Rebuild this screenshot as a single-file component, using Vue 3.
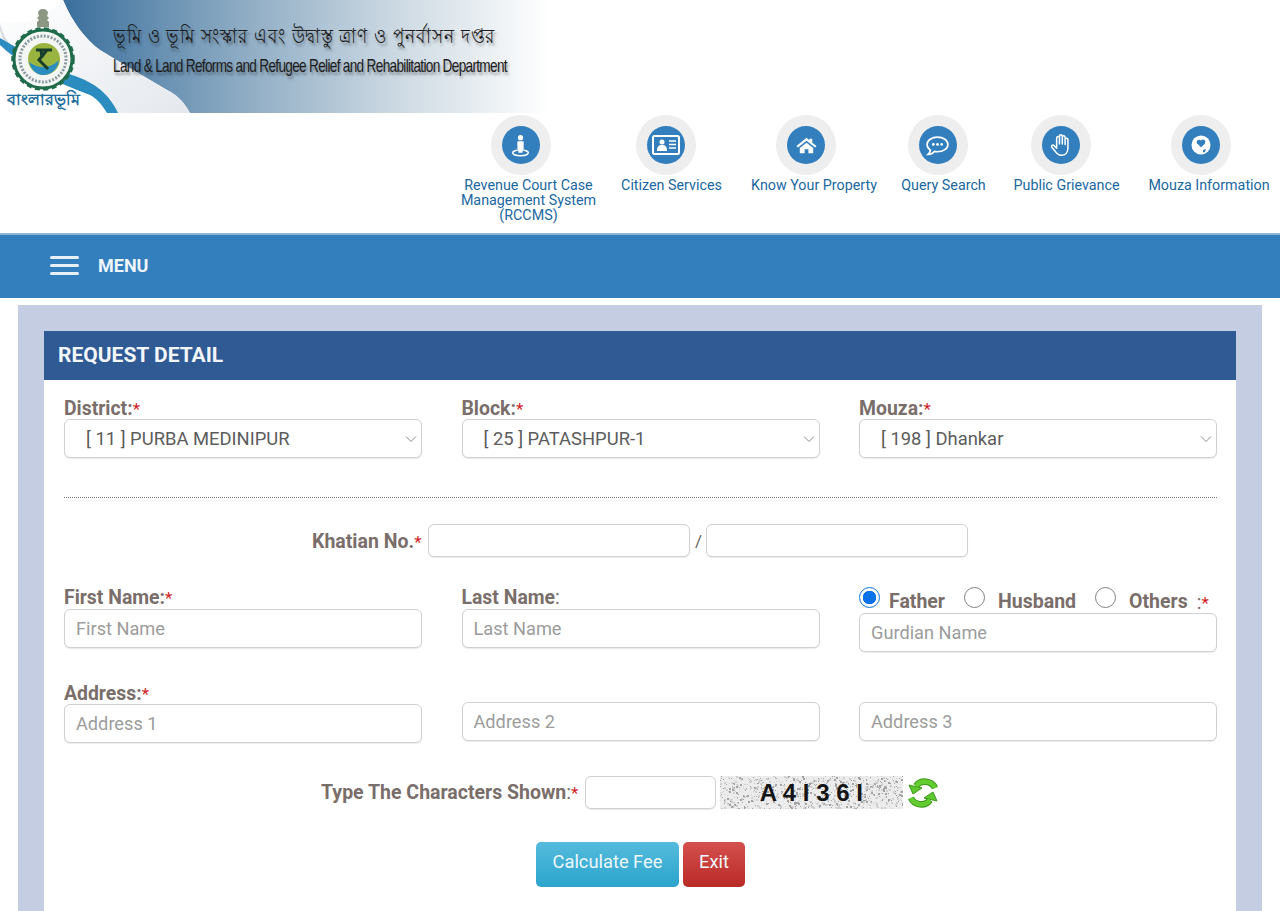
<template>
  <div class="page">
    <header class="banner">
      <svg class="banner-art" viewBox="0 0 550 113" width="550" height="113" aria-hidden="true">
        <defs>
          <linearGradient id="bannerFill" x1="0" y1="0" x2="1" y2="0">
            <stop offset="0" stop-color="#3a6f9c" />
            <stop offset="0.35" stop-color="#8aa9c2" />
            <stop offset="0.7" stop-color="#cfdbe4" />
            <stop offset="1" stop-color="#ffffff" />
          </linearGradient>
          <linearGradient id="gapFill" x1="0" y1="0" x2="1" y2="1">
            <stop offset="0" stop-color="#ffffff" />
            <stop offset="1" stop-color="#e4e8ed" />
          </linearGradient>
        </defs>
        <path d="M63 0H550V113H190C183 100 175 94 167 90L133 70L100 50C86 40 72 22 63 0Z" fill="url(#bannerFill)" />
        <path d="M63 0C72 22 86 40 100 50L133 70L167 90C175 94 183 100 190 113H118C112 98 104 90 90 84L0 38V20C20 30 50 14 63 0Z" fill="url(#gapFill)" />
        <path d="M0 24C4 38 10 46 22 56L14 57C6 48 2 38 0 30Z" fill="#d8dde2" />
        <path d="M0 38C24 52 50 66 72 75C88 80 108 90 118 113H107C101 103 96 98 90 95C80 91 72 88 65 85C44 76 26 68 14 57C8 52 4 49 0 45Z" fill="#2b8dbf" />
        <path d="M43 9c3 0 5 2 5 4l-1 3 2 2-2 2 2 2v5H37v-5l2-2-2-2 2-2-1-3c0-2 2-4 5-4Z" fill="#8b9683" />
        <circle cx="43" cy="59" r="29" fill="#f3f6f3" stroke="#1f6b4c" stroke-width="3" />
        <circle cx="43" cy="59" r="30.500" fill="none" stroke="#1f6b4c" stroke-width="2.500" stroke-dasharray="5 3.500" />
        <circle cx="43" cy="59" r="23" fill="none" stroke="#8b9aa0" stroke-width="3" stroke-dasharray="2 1.500" />
        <circle cx="44" cy="59" r="16" fill="#9ab53f" />
        <path d="M29 62c8 6 20 8 30-2-1 9-8 15-16 15-7 0-12-6-14-13Z" fill="#2b8dbf" />
        <path d="M36 50h16M47 50l-8 10 9 9M41 50l1 8" fill="none" stroke="#173d2b" stroke-width="3" />
      </svg>
      <span class="banner-seal-name">বাংলারভূমি</span>
      <div class="banner-text">
        <div class="banner-bn">ভূমি ও ভূমি সংস্কার এবং উদ্বাস্তু ত্রাণ ও পুনর্বাসন দপ্তর</div>
        <div class="banner-en">Land &amp; Land Reforms and Refugee Relief and Rehabilitation Department</div>
      </div>
    </header>

    <nav class="quick-links">
      <a class="quick-link rccms">
        <span class="halo"><span class="disc">
          <svg viewBox="0 0 24 24" width="25" height="25">
            <circle cx="12" cy="4.500" r="2.500" fill="#fff" />
            <path d="M9 8h6v7l-1 1v3h-4v-3l-1-1Z" fill="#fff" />
            <ellipse cx="12" cy="19" rx="7.500" ry="2.800" fill="none" stroke="#fff" stroke-width="1.400" />
          </svg>
        </span></span>
        <span class="quick-label">Revenue Court Case Management System (RCCMS)</span>
      </a>
      <a class="quick-link citizen">
        <span class="halo"><span class="disc">
          <svg viewBox="0 0 30 24" width="30" height="24">
            <rect x="2" y="3" width="26" height="18" rx="1.500" fill="none" stroke="#fff" stroke-width="2" />
            <circle cx="11" cy="9" r="2.500" fill="#fff" />
            <path d="M6 18c0-5 2-6 5-6s5 1 5 6Z" fill="#fff" />
            <path d="M18 8h7M18 11.500h7M18 15h7" stroke="#fff" stroke-width="1.500" />
          </svg>
        </span></span>
        <span class="quick-label">Citizen Services</span>
      </a>
      <a class="quick-link property">
        <span class="halo"><span class="disc">
          <svg viewBox="0 0 24 24" width="23" height="23">
            <path d="M12 4 1.500 12.500l1.500 1.500L12 7l9 7 1.500-1.500L18 9V5h-3v1.500Z" fill="#fff" />
            <path d="M5 14.500 12 9l7 5.500V20h-5v-4h-4v4H5Z" fill="#fff" />
          </svg>
        </span></span>
        <span class="quick-label">Know Your Property</span>
      </a>
      <a class="quick-link query">
        <span class="halo"><span class="disc">
          <svg viewBox="0 0 24 24" width="25" height="25">
            <path d="M12 4c5.500 0 10 3 10 7s-4.500 7-10 7c-1 0-2-.1-3-.3C7.500 19.500 5.500 20.500 3 20.500c1.200-1 2-2.400 2.200-4C3.200 15 2 13.100 2 11c0-4 4.500-7 10-7Z" fill="none" stroke="#fff" stroke-width="1.600" />
            <circle cx="8" cy="11" r="1.300" fill="#fff" />
            <circle cx="12" cy="11" r="1.300" fill="#fff" />
            <circle cx="16" cy="11" r="1.300" fill="#fff" />
          </svg>
        </span></span>
        <span class="quick-label">Query Search</span>
      </a>
      <a class="quick-link grievance">
        <span class="halo"><span class="disc">
          <svg viewBox="0 0 24 24" width="26" height="26">
            <path d="M8 12V5.500a1.300 1.300 0 0 1 2.600 0V11V3.800a1.300 1.300 0 0 1 2.600 0V11V4.800a1.300 1.300 0 0 1 2.600 0V11.500V7a1.300 1.300 0 0 1 2.600 0v8c0 4-2.500 6.500-6 6.500-3 0-4.500-1.500-6-4L3.500 14c-.8-1.200 1-2.500 2-1.500L8 15Z" fill="none" stroke="#fff" stroke-width="1.400" stroke-linejoin="round" />
          </svg>
        </span></span>
        <span class="quick-label">Public Grievance</span>
      </a>
      <a class="quick-link mouza">
        <span class="halo"><span class="disc">
          <svg viewBox="0 0 24 24" width="24" height="24">
            <circle cx="12" cy="12" r="9.500" fill="#fff" />
            <path d="M8 8c1-2 3-1.500 4-.5 1-1 3-1.500 4 0 1 2-.5 4-2 5l-2 2c-1-2-3-3-4-4-.5-.8-.5-1.700 0-2.500ZM14 17l3-1-1 3-2 .5Z" fill="#337fbd" />
          </svg>
        </span></span>
        <span class="quick-label">Mouza Information</span>
      </a>
    </nav>

    <div class="menu-bar">
      <span class="burger"><i></i><i></i><i></i></span>
      <span class="menu-title">MENU</span>
    </div>

    <main class="panel">
      <section class="card">
        <h2 class="card-title">REQUEST DETAIL</h2>
        <form class="card-body" @submit.prevent>
          <div class="grid three">
            <div v-for="field in selects" :key="field.label" class="field">
              <label class="lbl">{{ field.label }}:<em>*</em></label>
              <div class="select-wrap">
                <select class="ctl select">
                  <option>{{ field.value }}</option>
                </select>
                <svg class="chevron" viewBox="0 0 12 8" width="12" height="8"><path d="M1 1.500 6 6.500l5-5" fill="none" stroke="#8a8a8a" stroke-width="1" /></svg>
              </div>
            </div>
          </div>

          <hr class="rule" />

          <div class="khatian">
            <label class="lbl big">Khatian No.<em>*</em></label>
            <input class="ctl short" type="text" />
            <span class="slash">/</span>
            <input class="ctl short" type="text" />
          </div>

          <div class="grid three names">
            <div class="field">
              <label class="lbl">First Name:<em>*</em></label>
              <input class="ctl" type="text" placeholder="First Name" />
            </div>
            <div class="field">
              <label class="lbl">Last Name<span class="thin">:</span></label>
              <input class="ctl" type="text" placeholder="Last Name" />
            </div>
            <div class="field">
              <div class="relation">
                <label v-for="r in relations" :key="r" class="radio">
                  <input type="radio" name="relation" :value="r" v-model="relation" />
                  <span>{{ r }}</span>
                </label>
                <span class="thin colon">:<em>*</em></span>
              </div>
              <input class="ctl" type="text" placeholder="Gurdian Name" />
            </div>
          </div>

          <div class="grid three address">
            <div class="field">
              <label class="lbl">Address:<em>*</em></label>
              <input class="ctl" type="text" placeholder="Address 1" />
            </div>
            <input class="ctl lift" type="text" placeholder="Address 2" />
            <input class="ctl lift" type="text" placeholder="Address 3" />
          </div>

          <div class="captcha-row">
            <label class="lbl big">Type The Characters Shown<span class="thin">:</span><em>*</em></label>
            <input class="ctl captcha-input" type="text" />
            <div class="captcha">
              <svg class="noise" width="183" height="33" aria-hidden="true">
                <rect v-for="(d, i) in noise" :key="i" :x="d.x" :y="d.y" :width="d.s" :height="d.s" :fill="d.c" />
              </svg>
              <span class="captcha-text">A 4 I 3 6 I</span>
            </div>
            <svg class="refresh" viewBox="0 0 30 32" width="30" height="32">
              <g fill="none" stroke="#3f9a1f" stroke-width="6.500">
                <path d="M27 11C24 4 13 2 8 9" />
                <path d="M3 21C6 28 17 30 22 23" />
              </g>
              <path d="M1 8l13 3-9 6Z" fill="#5ec72d" stroke="#3f9a1f" stroke-linejoin="round" />
              <path d="M29 24l-13-3 9-6Z" fill="#5ec72d" stroke="#3f9a1f" stroke-linejoin="round" />
              <g fill="none" stroke="#62cc30" stroke-width="4.500">
                <path d="M27 11C24 4 13 2 8 9" />
                <path d="M3 21C6 28 17 30 22 23" />
              </g>
            </svg>
          </div>

          <div class="actions">
            <button class="btn info" type="button">Calculate Fee</button>
            <button class="btn danger" type="button">Exit</button>
          </div>
        </form>
      </section>
    </main>
  </div>
</template>

<script setup>
import { ref } from 'vue';

const selects = [
  { label: 'District', value: '[ 11 ] PURBA MEDINIPUR' },
  { label: 'Block', value: '[ 25 ] PATASHPUR-1' },
  { label: 'Mouza', value: '[ 198 ] Dhankar' },
];
const relations = ['Father', 'Husband', 'Others'];
const relation = ref('Father');

// speckle behind the captcha letters, seeded so every render looks the same
let seed = 17;
function rnd() {
  seed = (seed * 16807) % 2147483647;
  return seed / 2147483647;
}
const noise = Array.from({ length: 900 }, () => ({
  x: Math.floor(rnd() * 183),
  y: Math.floor(rnd() * 33),
  s: rnd() > 0.7 ? 2 : 1,
  c: rnd() > 0.45 ? '#cfcfcf' : '#a3a3a3',
}));
</script>

<style scoped>
.page {
  height: 911px;
  overflow: hidden;
  background: #fff;
  font-family: Roboto, "Noto Sans", sans-serif;
  color: #555;
}
.banner {
  position: relative;
  width: 550px;
  height: 113px;
  padding: 20px 0 0 113px;
  box-sizing: border-box;
}
.banner-art {
  position: absolute;
  left: 0;
  top: 0;
}
.banner-seal-name {
  position: absolute;
  left: 7px;
  top: 87px;
  font-size: 16px;
  font-weight: 700;
  color: #1f6f9c;
}
.banner-text {
  position: relative;
}
.banner-bn {
  height: 30px;
  font-family: "Noto Sans", "Liberation Serif", serif;
  font-size: 21px;
  line-height: 30px;
  letter-spacing: 1.400px;
  color: #1c1c1c;
  white-space: nowrap;
  text-shadow: 2px 3px 3px rgba(0, 0, 0, 0.35);
  transform: scaleX(0.796);
  transform-origin: left;
}
.banner-en {
  margin-top: 5px;
  font-family: "Liberation Sans", Arial, sans-serif;
  font-size: 19px;
  line-height: 22px;
  letter-spacing: -0.950px;
  color: #1c1c1c;
  white-space: nowrap;
  text-shadow: 2px 3px 3px rgba(0, 0, 0, 0.35);
  transform: scaleX(0.716);
  transform-origin: left;
}

.quick-links {
  display: flex;
  height: 120px;
  padding-top: 2px;
  box-sizing: border-box;
  justify-content: flex-end;
  padding-right: 10px;
}
.quick-link {
  display: flex;
  flex-direction: column;
  align-items: center;
  text-align: center;
}
.rccms { width: 137px; margin-right: 24px; --halo-shift: 16px; }
.citizen { width: 101px; margin-right: 29px; --halo-shift: 12px; }
.property { width: 126px; margin-right: 24px; --halo-shift: 16px; }
.query { width: 85px; margin-right: 27px; --halo-shift: 12px; }
.grievance { width: 107px; margin-right: 28px; --halo-shift: 12px; }
.mouza { width: 122px; --halo-shift: 16px; }
.halo {
  width: 60px;
  height: 60px;
  margin-right: var(--halo-shift);
  border-radius: 50%;
  background: #eeeeee;
  display: flex;
  align-items: center;
  justify-content: center;
}
.disc {
  width: 38px;
  height: 38px;
  border-radius: 50%;
  background: #337fbd;
  display: flex;
  align-items: center;
  justify-content: center;
}
.quick-label {
  margin-top: 3px;
  font-size: 14.300px;
  line-height: 15px;
  color: #20689f;
}

.menu-bar {
  display: flex;
  align-items: center;
  height: 65px;
  box-sizing: border-box;
  padding: 0 0 2px 50px;
  background: #337fbd;
  border-top: 2px solid #8fb6d4;
}
.burger {
  display: flex;
  flex-direction: column;
  gap: 5px;
  width: 29px;
}
.burger i {
  display: block;
  height: 3px;
  border-radius: 2px;
  background: #e8f1f8;
}
.menu-title {
  margin-left: 19px;
  font-size: 18px;
  font-weight: 700;
  color: #eef5fb;
}

.panel {
  margin: 7px 18px 0;
  padding: 26px 26px 0;
  height: 620px;
  background: #c5cde3;
}
.card {
  background: #fff;
  height: 100%;
}
.card-title {
  margin: 0;
  height: 49px;
  padding-left: 14px;
  background: #2f5a93;
  font-size: 21px;
  font-weight: 700;
  line-height: 48px;
  color: #f2f5fa;
}
.card-body {
  padding: 18px 19px 0 20px;
}
.grid.three {
  display: grid;
  grid-template-columns: repeat(3, 358px);
  column-gap: 39.500px;
}
.field {
  display: flex;
  flex-direction: column;
}
.lbl {
  font-size: 19.400px;
  font-weight: 700;
  line-height: 21px;
  color: #7a6e6b;
  white-space: nowrap;
}
.lbl em,
.colon em {
  font-style: normal;
  font-size: 17px;
  font-weight: 400;
  line-height: 0;
  color: #d21f26;
}
.thin {
  font-weight: 400;
}
.ctl {
  display: block;
  width: 100%;
  height: 39px;
  box-sizing: border-box;
  padding: 0 11px;
  border: 1px solid #d0d0d0;
  border-radius: 6px;
  background: #fff;
  font-family: Roboto, "Noto Sans", sans-serif;
  font-size: 18.200px;
  color: #5c5c5c;
  outline: none;
  box-shadow: 0 1px 1px rgba(0, 0, 0, 0.08);
}
.ctl::placeholder {
  color: #9c9c9c;
  opacity: 1;
}
.select-wrap {
  position: relative;
}
.select {
  appearance: none;
  padding: 0 0 0 21px;
  font-size: 18.400px;
}
.chevron {
  position: absolute;
  right: 5px;
  top: 16px;
}
.rule {
  margin: 39px 0 0;
  border: 0;
  border-top: 1px dotted #777;
}
.khatian {
  display: flex;
  align-items: center;
  margin-top: 26px;
  padding-left: 248px;
}
.lbl.big {
  margin-right: 7px;
  padding-top: 2px;
  font-size: 19.500px;
}
.captcha-row .lbl.big {
  padding-top: 0;
}
.short {
  width: 262px;
  height: 33px;
}
.slash {
  width: 16px;
  text-align: center;
  font-size: 17px;
  color: #666;
}
.names {
  margin-top: 30px;
}
.names .lbl {
  padding-bottom: 1px;
}
.relation {
  display: flex;
  align-items: center;
  height: 27px;
  margin-top: -1px;
  white-space: nowrap;
  font-size: 19.500px;
  font-weight: 700;
  color: #7a6e6b;
}
.radio {
  display: flex;
  align-items: center;
  margin-right: 19px;
}
.radio span {
  margin-left: 9px;
  margin-top: 4px;
}
.radio + .radio span {
  margin-left: 13px;
}
.radio input {
  appearance: none;
  width: 21px;
  height: 21px;
  margin: 0 0 4px;
  border: 1.500px solid #808080;
  border-radius: 50%;
  background: #fff;
}
.radio input:checked {
  border-color: #0b72e8;
  background: radial-gradient(circle, #0b72e8 0 6.500px, #fff 7px);
}
.colon {
  margin: 5px 0 0 -10px;
}
.address {
  margin-top: 31px;
}
.lift {
  align-self: end;
  margin-bottom: 2px;
}
.captcha-row {
  display: flex;
  align-items: center;
  margin-top: 33px;
  padding-left: 257px;
}
.captcha-input {
  width: 131px;
  height: 33px;
}
.captcha {
  position: relative;
  width: 183px;
  height: 33px;
  margin-left: 4px;
  background: #ececec;
  overflow: hidden;
}
.noise {
  position: absolute;
  left: 0;
  top: 0;
}
.captcha-text {
  position: relative;
  display: block;
  font-family: "Liberation Sans", Arial, sans-serif;
  font-size: 24px;
  font-weight: 700;
  line-height: 33px;
  word-spacing: -2px;
  letter-spacing: 1px;
  text-align: center;
  color: #151515;
}
.refresh {
  margin-left: 5px;
}
.actions {
  display: flex;
  justify-content: center;
  gap: 4px;
  margin-top: 33px;
}
.btn {
  height: 45px;
  padding: 0 16px 6px;
  border: 0;
  border-radius: 5px;
  font-family: Roboto, "Noto Sans", sans-serif;
  font-size: 18.300px;
  color: #eef7fb;
}
.info {
  width: 143px;
  background: linear-gradient(#55bbdc, #2ba4cd);
}
.danger {
  width: 62px;
  background: linear-gradient(#d4504e, #b92a26);
}
</style>
